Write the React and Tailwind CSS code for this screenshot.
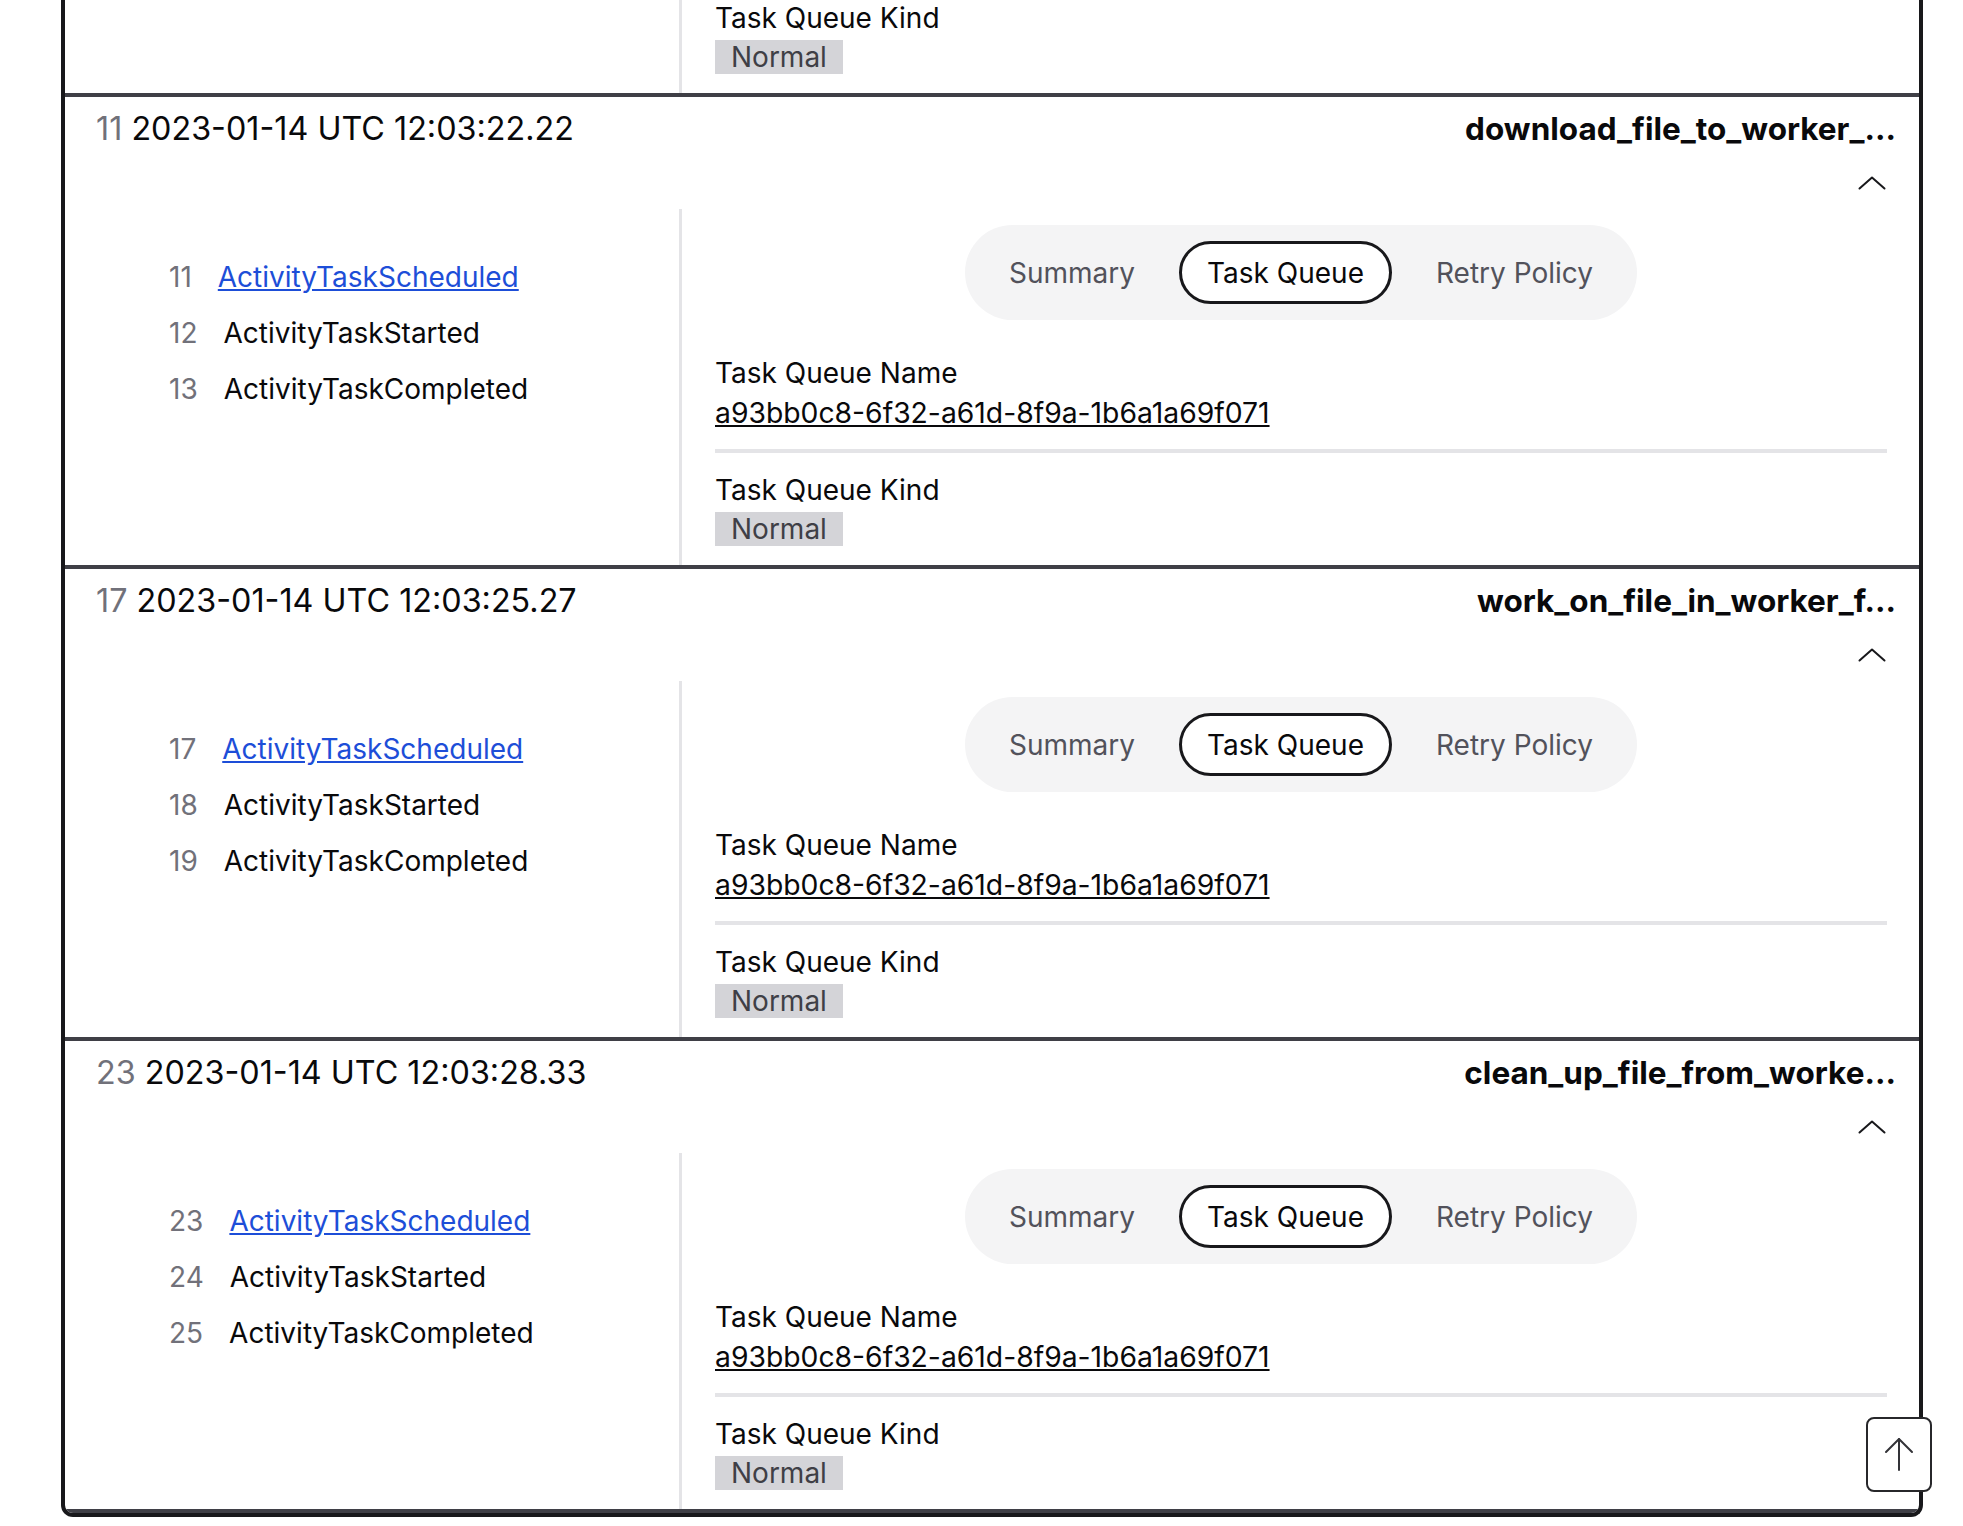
import React from "react";

const sections = [
  {
    n: 5,
    time: "2023-01-14 UTC 12:03:19.11",
    title: "start_file_processing_w...",
    events: [
      { n: 5, name: "ActivityTaskScheduled" },
      { n: 6, name: "ActivityTaskStarted" },
      { n: 7, name: "ActivityTaskCompleted" },
    ],
  },
  {
    n: 11,
    time: "2023-01-14 UTC 12:03:22.22",
    title: "download_file_to_worker_...",
    events: [
      { n: 11, name: "ActivityTaskScheduled" },
      { n: 12, name: "ActivityTaskStarted" },
      { n: 13, name: "ActivityTaskCompleted" },
    ],
  },
  {
    n: 17,
    time: "2023-01-14 UTC 12:03:25.27",
    title: "work_on_file_in_worker_f...",
    events: [
      { n: 17, name: "ActivityTaskScheduled" },
      { n: 18, name: "ActivityTaskStarted" },
      { n: 19, name: "ActivityTaskCompleted" },
    ],
  },
  {
    n: 23,
    time: "2023-01-14 UTC 12:03:28.33",
    title: "clean_up_file_from_worke...",
    events: [
      { n: 23, name: "ActivityTaskScheduled" },
      { n: 24, name: "ActivityTaskStarted" },
      { n: 25, name: "ActivityTaskCompleted" },
    ],
  },
];

function ChevronUp() {
  return (
    <svg width="28" height="14" viewBox="0 0 28 14" fill="none">
      <polyline
        points="1.5,12.5 14,1.5 26.5,12.5"
        stroke="#18181b"
        strokeWidth="2"
        strokeLinecap="round"
        strokeLinejoin="round"
      />
    </svg>
  );
}

function ArrowUp() {
  return (
    <svg width="30" height="35" viewBox="0 0 30 35" fill="none">
      <polyline
        points="2,15 15,2 28,15"
        stroke="#333338"
        strokeWidth="2"
        strokeLinecap="round"
        strokeLinejoin="round"
      />
      <line x1="15" y1="2" x2="15" y2="33" stroke="#333338" strokeWidth="2" strokeLinecap="round" />
    </svg>
  );
}

function Tab({ label, active }) {
  return (
    <div
      className={
        active
          ? "flex h-[63px] items-center rounded-full border-[3px] border-[#18181b] bg-white px-[25px] text-[28px] text-[#09090b]"
          : "flex h-[63px] items-center rounded-full border-[3px] border-transparent px-[25px] text-[28px] text-[#52525b]"
      }
    >
      {label}
    </div>
  );
}

function Section({ s }) {
  return (
    <div className="border-b-4 border-[#3f3f46]">
      <div className="flex h-[112px] flex-col">
        <div className="flex h-[64px] items-center justify-between pl-[31px] pr-[23px]">
          <div className="text-[32.3px] text-[#09090b]">
            <span className="text-[#71717a]">{s.n}</span> {s.time}
          </div>
          <div className="text-[31.5px] font-bold text-[#09090b]">{s.title}</div>
        </div>
        <div className="flex justify-end pr-[33px] pt-[15px]">
          <ChevronUp />
        </div>
      </div>
      <div className="flex">
        <div className="w-[617px] shrink-0 border-r-[3px] border-[#e4e4e7] pl-[104px] pt-[40px]">
          {s.events.map((e, i) => (
            <div key={e.n} className="flex h-[56px] items-center gap-[26px] text-[28px]">
              <span className="text-[#71717a]">{e.n}</span>
              {i === 0 ? (
                <span className="text-[#1d4ed8] underline">{e.name}</span>
              ) : (
                <span className="text-[#09090b]">{e.name}</span>
              )}
            </div>
          ))}
        </div>
        <div className="flex-1 pl-[33px] pr-[32px] pt-[16px] pb-[19px] text-[28px] text-[#09090b]">
          <div className="flex justify-center">
            <div className="flex gap-[16px] rounded-full bg-[#f4f4f5] p-[16px]">
              <Tab label="Summary" />
              <Tab label="Task Queue" active />
              <Tab label="Retry Policy" />
            </div>
          </div>
          <div className="mt-[33px] leading-[40px]">Task Queue Name</div>
          <div className="text-[28.3px] leading-[40px]">
            <span className="underline">a93bb0c8-6f32-a61d-8f9a-1b6a1a69f071</span>
          </div>
          <div className="mt-[16px] h-[4px] bg-[#e4e4e7]" />
          <div className="mt-[17px] leading-[40px]">Task Queue Kind</div>
          <div className="mt-[2px] flex">
            <span className="h-[34px] bg-[#d4d4d8] px-[16px] leading-[34px] text-[#3f3f46]">Normal</span>
          </div>
        </div>
      </div>
    </div>
  );
}

export default function App() {
  return (
    <div className="h-[1526px] overflow-hidden bg-white font-['Inter','Noto_Sans',sans-serif]">
      <div className="-mt-[375px]">
        <div className="ml-[61px] w-[1862px] overflow-hidden rounded-b-[12px] border-x-4 border-b-4 border-[#18181b]">
          {sections.map((s) => (
            <Section key={s.n} s={s} />
          ))}
        </div>
      </div>
      <button className="fixed bottom-[34px] right-[31px] flex h-[75px] w-[66px] items-center justify-center rounded-[8px] border-2 border-[#27272a] bg-white">
        <ArrowUp />
      </button>
    </div>
  );
}
